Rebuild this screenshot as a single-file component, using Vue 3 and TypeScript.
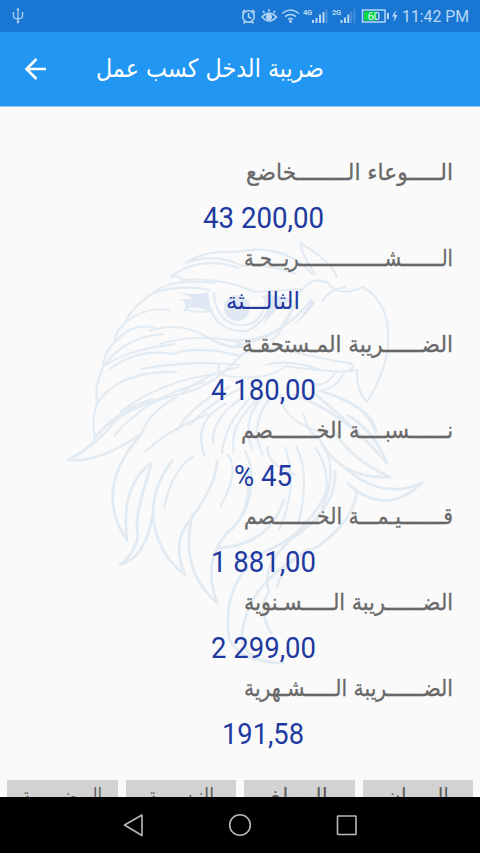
<script setup lang="ts">
import { ref } from 'vue'

interface Row {
    label: string
    width: number
    value: string
    valueWidth: number
    arabic?: boolean
}

const rows = ref<Row[]>([
    { label: 'الـــــوعاء الــــــــخاضع', width: 207, value: '43 200,00', valueWidth: 121 },
    { label: 'الـــــــشـــــــــــــــريــحـة', width: 209, value: 'الثالـــثة', valueWidth: 74, arabic: true },
    { label: 'الضــــــريبة المـستحقـة', width: 211, value: '4 180,00', valueWidth: 105 },
    { label: 'نــــــسبــــة الخـــــــصم', width: 212, value: '% 45', valueWidth: 58 },
    { label: 'قـــــــيـمـــة الخـــــــصم', width: 209, value: '1 881,00', valueWidth: 105 },
    { label: 'الضــــــريبة الـــــسـنوية', width: 209, value: '2 299,00', valueWidth: 105 },
    { label: 'الضــــــريبة الـــــشـهرية', width: 209, value: '191,58', valueWidth: 82 }
])

const columns = ref([
    { text: 'البيـــان', width: 63 },
    { text: 'الـمبلغ', width: 58 },
    { text: 'النـسبـــة', width: 66 },
    { text: 'الـــضريبـــة', width: 80 }
])
</script>
<template>
    <div class="screen">
        <header class="status_bar">
            <svg class="usb" width="14" height="18" viewBox="0 0 14 18">
                <path d="M7 3v12M2.500 6v3.500q0 2 4.500 2.500q4.500-.5 4.500-2.500V6" />
                <circle cx="7" cy="2.500" r="1.300" /><circle cx="7" cy="15" r="1.300" />
                <circle cx="2.500" cy="6" r="1" /><circle cx="11.500" cy="6" r="1" />
            </svg>
            <svg class="indicators" width="240" height="32" viewBox="240 0 240 32">
                <g class="line">
                    <circle cx="248.500" cy="16.500" r="5.800" />
                    <path d="M248.500 13v4l3 1.500M242 12.500l3-2.800M255 12.500l-3-2.800M245 21.500l-1.500 2M252 21.500l1.500 2" />
                    <path d="M262 17q7-7.500 14.500 0q-7 8-14.500 0zM264.500 13l-1.500-2M269 11.500V9M273.500 13l1.500-2" />
                    <path d="M282 13.500q8.500-7 17 0M285 16.700q5.500-4.500 11 0M288 19.500q2.500-2 5 0" />
                </g>
                <circle class="solid" cx="269" cy="17" r="3" />
                <circle class="solid" cx="290.500" cy="21.500" r="1.400" />
                <text class="net" x="303" y="15" textLength="9">4G</text>
                <text class="net" x="332" y="15" textLength="9">2G</text>
                <path class="solid" d="M312 20h2v3h-2zM315.500 18h2v5h-2zM319 14.500h2V23h-2zM322.500 12h2v11h-2zM340.500 20h2v3h-2zM344 17.500h2V23h-2z" />
                <path class="solid" d="M347.300 14.500h2V23h-2z" />
                <path class="dim" d="M325.500 9.500h2V23h-2zM350.500 11.500h1.500V23h-1.500zM353.500 9h1.500v14h-1.500z" />
                <rect class="line" x="362.500" y="10" width="22.500" height="12" />
                <rect class="charge" x="364" y="11.500" width="12.500" height="9" />
                <text class="percent" x="367.500" y="20.300" textLength="12.500">60</text>
                <path class="solid" d="M387 13h2v6h-2zM396 10l-4 6.500h2.500l-1 5.500l4-7h-2.500z" />
                <text class="clock" x="402" y="22.300" textLength="67" lengthAdjust="spacingAndGlyphs">11:42 PM</text>
            </svg>
        </header>
        <div class="toolbar">
            <svg class="back" width="24" height="24" viewBox="0 0 24 24">
                <path d="M22 12H3M12.500 2L2.500 12l10 10" />
            </svg>
            <svg class="arabic title" width="228" height="40">
                <text x="228" y="27.500" textLength="228" lengthAdjust="spacingAndGlyphs">ضريبة الدخل كسب عمل</text>
            </svg>
        </div>
        <main class="content">
            <svg class="eagle" width="370" height="450" viewBox="60 230 370 450">
                <!-- crown and back of the head -->
                <path d="M185 263Q205 250 235 252Q285 242 313 275M185 263Q215 252 242 266Q266 263 296 274M300 243Q333 262 337 278M300 243Q304 260 316 275M170 277Q200 255 239 268M170 277Q180 275 182 280Q222 277 255 292L301 289" />
                <path d="M153 293Q170 278 215 283M153 293Q180 284 211 290M153 293Q131 308 125 323Q145 306 170 310M125 323Q114 333 115 342Q135 320 158 329M115 342Q104 352 103 367Q125 336 164 334" />
                <path d="M103 367Q125 350 175 344M110 369Q138 348 172 354Q200 345 240 356M103 367Q94 387 97 403Q120 370 177 372M97 403Q91 420 95 438Q115 410 153 399M95 438Q119 408 184 393Q215 385 242 354" />
                <path d="M95 438Q92 449 68 460Q98 443 114 423Q135 400 168 398M68 460Q100 463 142 433Q149 412 177 397M114 436Q146 397 205 382M160 344Q200 332 241 343M149 331Q180 321 205 336T246 346M184 309Q203 315 213 309" />
                <!-- beak -->
                <path d="M301 291Q313 275 328 283Q338 298 363 287Q386 301 388 330Q391 363 367 402Q356 391 357 370Q342 373 330 371Q300 369 286 366Q266 382 227 376Q213 371 221 364M322 302Q329 289 346 287M301 289Q290 315 280 328Q260 342 230 340M242 354Q270 345 295 352T350 363Q357 367 348 371M265 365Q290 358 324 371M233 346Q280 340 312 299M271 341Q286 328 294 306" />
                <!-- eye -->
                <path d="M207 292Q210 333 247 331Q270 320 271 294M214 292Q215 320 237 325Q264 328 267 294" />
                <circle class="shade" cx="237" cy="308" r="13" />
                <path class="shade" d="M178 292Q194 296 208 292L210 312Q190 303 183 313Q189 301 178 300L193 298ZM262 296Q282 294 295 301Q278 304 263 325Q273 303 260 296ZM310 302Q295 330 276 337Q302 323 316 301Z" />
                <!-- neck feathers -->
                <path class="bold" d="M142 433Q92 490 127 540Q120 485 152 463M152 463Q133 518 138 535Q135 554 120 565Q146 558 153 513Q154 483 173 460M153 513Q155 552 185 575Q171 542 190 520Q217 484 217 460M193 513Q178 569 217 603Q202 562 227 533Q253 512 248 470M219 548Q270 545 284 499" />
                <path class="bold" d="M247 567Q223 596 229 638Q238 662 283 663Q229 661 246 617Q253 583 309 549M269 592Q256 609 272 634M269 592Q261 567 290 540Q338 508 335 470M277 588Q283 559 317 547Q354 521 357 490M235 560Q300 549 327 491" />
                <path class="bold" d="M347 483Q385 518 422 483Q382 501 344 467M321 443Q344 480 390 477Q350 459 333 429M312 391Q356 428 387 463Q373 429 347 415M293 394Q341 412 377 452M321 391Q373 407 376 432Q368 409 339 398" />
                <path d="M205 457Q191 421 227 403M213 444Q211 417 244 397M222 454Q224 425 251 397M234 453Q228 422 264 394M253 451Q240 422 263 395M263 455Q248 426 270 398M268 446Q264 462 295 475M280 394Q283 423 327 434M303 413Q309 435 316 435Q341 463 323 506M315 447Q338 480 316 523M296 446Q311 473 298 525M285 447Q299 485 279 530M245 450Q259 479 243 516" />
                <path d="M145 452Q168 430 208 414M164 508Q172 469 194 456M220 507Q241 470 227 454M120 412Q163 380 216 374M181 394Q200 376 239 367M313 383Q326 389 337 370M318 391Q334 390 344 374M141 369Q190 360 241 365M189 426Q209 403 242 388M177 431Q191 405 229 387" />
            </svg>
            <section class="results">
                <template v-for="row in rows" :key="row.label">
                    <svg class="arabic label" :width="row.width" height="36">
                        <text :x="row.width" y="25" :textLength="row.width" lengthAdjust="spacingAndGlyphs">{{ row.label }}</text>
                    </svg>
                    <div class="value">
                        <svg :class="row.arabic ? 'arabic' : 'number'" :width="row.valueWidth" height="50">
                            <text :x="row.arabic ? row.valueWidth : 0" :y="row.arabic ? 31.5 : 36.5" :textLength="row.valueWidth" lengthAdjust="spacingAndGlyphs">{{ row.value }}</text>
                        </svg>
                    </div>
                </template>
            </section>
            <section class="table_head">
                <div v-for="col in columns" :key="col.text" class="cell">
                    <svg class="arabic" :width="col.width" height="30">
                        <text :x="col.width" y="24" :textLength="col.width" lengthAdjust="spacingAndGlyphs">{{ col.text }}</text>
                    </svg>
                </div>
            </section>
        </main>
        <nav class="nav_bar">
            <svg width="480" height="56" viewBox="0 0 480 56">
                <path d="M142 18L124.500 28L142 38.500z" />
                <circle cx="240" cy="28" r="10.300" />
                <rect x="337.500" y="19" width="18.500" height="18.500" rx=".5" />
            </svg>
        </nav>
    </div>
</template>
<style>
body {
    margin: 0;
}
</style>
<style scoped>
.screen {
    width: 480px;
    height: 853px;
    display: flex;
    flex-direction: column;
    overflow: hidden;
    background: #fafafa;
    font-family: Roboto, "DejaVu Sans", sans-serif;
}

svg {
    display: block;
    flex: none;
    overflow: visible;
}

.status_bar {
    height: 32px;
    flex: none;
    display: flex;
    justify-content: space-between;
    align-items: center;
    background: #1976d2;
}

.usb {
    margin-left: 11px;
    fill: #a9cdf0;
}

.usb path {
    fill: none;
    stroke: #a9cdf0;
    stroke-width: 1.3;
}

.line {
    fill: none;
    stroke: #b5d6f5;
    stroke-width: 1.5;
}

.solid,
.clock,
.net,
.percent {
    fill: #b9d9f6;
}

.dim {
    fill: #4a91da;
}

.charge {
    fill: #05dc3c;
}

.net {
    font-size: 7.5px;
    font-weight: bold;
}

.percent {
    font-size: 11.5px;
    fill: #e0f4f4;
}

.clock {
    font-size: 16px;
}

.toolbar {
    height: 74px;
    flex: none;
    display: flex;
    align-items: center;
    background: #2196f3;
    border-bottom: 1px solid #8cc8f6;
}

.back {
    margin-left: 24px;
    fill: none;
    stroke: #fff;
    stroke-width: 2.6;
}

.arabic {
    direction: rtl;
    font-family: "DejaVu Sans", sans-serif;
}

.title {
    margin-left: 48px;
    fill: #fff;
    font-size: 25px;
}

.content {
    position: relative;
    height: 690px;
    flex: none;
    overflow: hidden;
}

.eagle {
    position: absolute;
    left: 60px;
    top: 123px;
    fill: none;
    stroke: #e3ebf2;
    stroke-width: 2.2;
    stroke-linejoin: round;
}

.bold {
    stroke-width: 2.8;
}

.shade {
    fill: #e0e9f3;
    stroke: none;
}

.results {
    position: relative;
    padding: 48px 27px 0 0;
    height: 625px;
    box-sizing: border-box;
    display: flex;
    flex-direction: column;
    align-items: flex-end;
}

.label {
    font-size: 23px;
    fill: #686868;
    stroke: #686868;
    stroke-width: 0.3;
}

.value {
    width: 380px;
    height: 50.2px;
    display: flex;
    justify-content: center;
    fill: #2039a0;
}

.number {
    font-size: 29px;
}

.value .arabic {
    font-size: 24px;
}

.table_head {
    direction: rtl;
    display: flex;
    gap: 8px;
    padding: 0 7px;
    margin-top: 48px;
}

.cell {
    flex: 1;
    height: 40px;
    display: flex;
    justify-content: center;
    background: #d2d2d2;
    font-size: 23px;
    fill: #5d5d5d;
}

.nav_bar {
    height: 56px;
    flex: none;
    background: #000;
    fill: none;
    stroke: #b8b8b8;
    stroke-width: 1.6;
    stroke-linejoin: round;
}
</style>
